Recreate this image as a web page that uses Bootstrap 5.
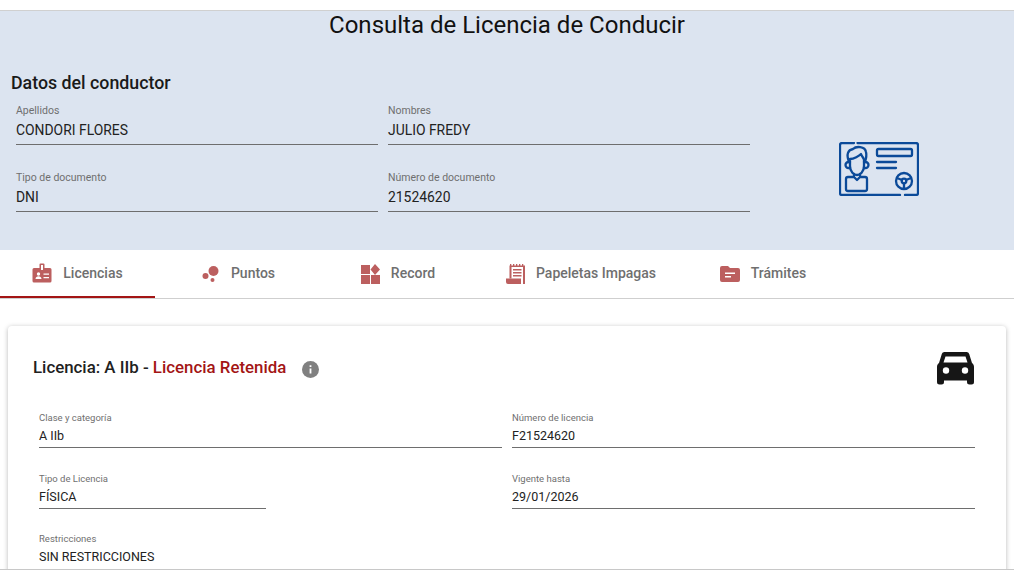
<!DOCTYPE html>
<html lang="es">

<head>
    <meta charset="UTF-8">
    <title>Consulta de Licencia de Conducir</title>
    <meta name="viewport" content="width=device-width, initial-scale=1">
    <link href="https://cdn.jsdelivr.net/npm/bootstrap@5.3.3/dist/css/bootstrap.min.css" rel="stylesheet">
    <style>
        html, body { height: 100%; overflow: hidden; }
        body { font-family: Roboto, "Liberation Sans", sans-serif; background: #fff; color: #212121; }

        .page-frame { margin-top: 10px; height: 560px; overflow: hidden; border-top: 1px solid #d0d0d0; border-bottom: 1px solid #c8c8c8; }

        /* cabecera */
        .head-panel { height: 239px; background: #dce4f0; }
        .head-title { font-size: 24px; font-weight: 400; line-height: 28px; margin: 0; text-align: center; color: #111; }
        .head-sub { font-size: 17.8px; font-weight: 500; line-height: 22px; margin: 33px 0 0 11px; color: #1a1a1a; }
        .driver-grid { width: 760px; padding: 0 0 0 16px; display: grid; grid-template-columns: 362px 362px; column-gap: 10px; row-gap: 26px; margin-top: 10px; }
        .icon-slot { width: 254px; padding-left: 79px; margin-top: 48px; }

        .data-field { border-bottom: 1px solid #6e6e6e; }
        .data-field label { display: block; font-size: 10.5px; line-height: 13px; color: #6f6f6f; margin: 0; }
        .data-field div { font-size: 13.9px; line-height: 18px; color: #222; margin-top: 4px; padding-bottom: 5px; }

        /* tabs */
        .tab-strip { height: 49px; border-bottom: 1px solid #cfcfcf; flex-wrap: nowrap; }
        .tab-strip .nav-link { height: 48px; padding: 0 0 1px; display: flex; align-items: center; justify-content: center; gap: 11px; font-size: 14px; font-weight: 500; color: #6f6f6f; }
        .tab-strip .nav-link.active { border-bottom: 2px solid #a31515; height: 48px; padding-bottom: 0; color: #6f6f6f; }
        .tab-w1 { width: 155px; }
        .tab-w2 { width: 167px; }
        .tab-w3 { width: 152px; }
        .tab-w4 { width: 214px; }
        .tab-w5 { width: 150px; }
        .tab-glyph { fill: #bc5f5f; display: block; }

        /* tarjeta */
        .lic-card { margin: 27px 8px 0; border: 0; border-radius: 4px; box-shadow: 0 1px 5px rgba(0, 0, 0, .28); padding: 26px 32px 40px 25px; }
        .lic-title { font-size: 16.85px; font-weight: 500; line-height: 20px; margin: 4px 0 0; color: #212121; }
        .lic-title span { color: #a31515; }
        .lic-head { height: 54px; }
        .info-dot { margin-left: 16px; margin-top: 9px; }
        .lic-grid { padding-left: 6px; display: grid; grid-template-columns: 463px 463px; column-gap: 10px; row-gap: 24.5px; margin-top: 6px; }
        .lic-grid .data-field label { font-size: 9.5px; line-height: 12px; }
        .lic-grid .data-field div { font-size: 12.5px; line-height: 16px; margin-top: 4px; padding-bottom: 3px; }
        .short-field { width: 227px; }
        .no-rule { border-bottom: 0 !important; }
    </style>
</head>

<body>
    <div class="page-frame">

        <!-- Datos del conductor -->
        <section class="head-panel">
            <h1 class="head-title">Consulta de Licencia de Conducir</h1>
            <h2 class="head-sub">Datos del conductor</h2>
            <div class="d-flex">
                <div class="driver-grid">
                    <div class="data-field"><label>Apellidos</label><div>CONDORI FLORES</div></div>
                    <div class="data-field"><label>Nombres</label><div>JULIO FREDY</div></div>
                    <div class="data-field"><label>Tipo de documento</label><div>DNI</div></div>
                    <div class="data-field"><label>Número de documento</label><div>21524620</div></div>
                </div>
                <div class="icon-slot">
                    <svg width="80" height="54" viewBox="0 0 80 54" fill="none" stroke="#0b4a99" stroke-width="2.3" stroke-linecap="round" stroke-linejoin="round">
                        <path d="M15 1H3a2 2 0 0 0-2 2v48a2 2 0 0 0 2 2h58"/>
                        <path d="M18.500 1H77a2 2 0 0 1 2 2v48a2 2 0 0 1-2 2H66"/>
                        <rect x="38" y="7" width="35" height="7" rx="1.500"/>
                        <path d="M38 20h19M38 26h19"/>
                        <path d="M10 20C7 12 9 8 14 7c3-3 12-3 13 3 1 4 0 7-1 10"/>
                        <path d="M11 17c4 0 9-3 11-5 1 3 3 4 3 6v6c0 6-4 9-7 9s-7-3-7-9z"/>
                        <path d="M11 20H9.500a3 3 0 0 0 0 6H11M25 20h1.500a3 3 0 0 1 0 6H25"/>
                        <path d="M15 32v3H9a2 2 0 0 0-2 2v10a2 2 0 0 0 2 2h17a2 2 0 0 0 2-2V37a2 2 0 0 0-2-2h-5v-3M15 35l3 3 3-3"/>
                        <circle cx="65" cy="39" r="8"/>
                        <circle cx="65" cy="39" r="2.300"/>
                        <path d="M58 36l5 2M72 36l-5 2M65 42v4"/>
                    </svg>
                </div>
            </div>
        </section>

        <!-- Tabs -->
        <ul class="nav tab-strip">
            <li class="nav-item tab-w1">
                <a class="nav-link active" href="#">
                    <svg class="tab-glyph" width="20" height="20" viewBox="0 0 20 20"><path d="M2 5h5.500V1.500a1 1 0 0 1 1-1h3a1 1 0 0 1 1 1V5H18a1.500 1.500 0 0 1 1.500 1.500V18a1.500 1.500 0 0 1-1.500 1.500H2A1.500 1.500 0 0 1 .5 18V6.500A1.500 1.500 0 0 1 2 5z"/><path fill="#fff" d="M9 2h2v5H9z"/><circle cx="6.500" cy="11" r="1.700" fill="#fff"/><path fill="#fff" d="M3.500 16c0-2 1.500-2.800 3-2.800s3 .8 3 2.800zM11.500 10.500H17v1.300h-5.500zM11.500 14H17v1.300h-5.500z"/></svg>
                    Licencias
                </a>
            </li>
            <li class="nav-item tab-w2">
                <a class="nav-link" href="#">
                    <svg class="tab-glyph" width="18" height="18" viewBox="0 0 18 18"><circle cx="11.500" cy="6" r="5"/><circle cx="3.500" cy="11" r="3"/><circle cx="10.500" cy="15" r="2"/></svg>
                    Puntos
                </a>
            </li>
            <li class="nav-item tab-w3">
                <a class="nav-link" href="#">
                    <svg class="tab-glyph" width="19" height="20" viewBox="0 0 19 20"><path d="M0 1h9v9H0zM0 11h9v9H0zM10 11h9v9h-9zM14 0l5 5.500-5 5.500-4.500-5.500z"/></svg>
                    Record
                </a>
            </li>
            <li class="nav-item tab-w4">
                <a class="nav-link" href="#">
                    <svg class="tab-glyph" width="19" height="20" viewBox="0 0 19 20"><path d="M4 0h1.300v1.500H7V0h1.300v1.500H10V0h1.300v1.500H13V0h1.300v1.500H16V0h1.300v1.500H19V19.500a.5.500 0 0 1-.5.500H17V3H5.500v11.500H3.500V1.500H4z"/><path d="M7 5h8.500v1.600H7zM7 8h8.500v1.600H7zM7 11h8.500v1.600H7zM0 14.500h15V20H2a2 2 0 0 1-2-2z"/></svg>
                    Papeletas Impagas
                </a>
            </li>
            <li class="nav-item tab-w5">
                <a class="nav-link" href="#">
                    <svg class="tab-glyph" width="20" height="16" viewBox="0 0 20 16"><path d="M2 0h6l2 2h8a2 2 0 0 1 2 2v10a2 2 0 0 1-2 2H2a2 2 0 0 1-2-2V2a2 2 0 0 1 2-2z"/><path fill="#fff" d="M5 6.500h10V8H5zM5 10h6v1.500H5z"/></svg>
                    Trámites
                </a>
            </li>
        </ul>

        <!-- Licencia -->
        <div class="card lic-card">
            <div class="lic-head d-flex justify-content-between align-items-start">
                <div class="d-flex align-items-center">
                    <h3 class="lic-title">Licencia: A IIb - <span>Licencia Retenida</span></h3>
                    <svg class="info-dot" width="17" height="17" viewBox="0 0 17 17"><circle cx="8.500" cy="8.500" r="8.500" fill="#808080"/><path fill="#fff" d="M7.600 7.500h1.800v5H7.600zM7.600 4.300h1.800V6H7.600z"/></svg>
                </div>
                <svg width="37" height="33" viewBox="0 0 37 33"><path fill="#161616" d="M7.500 0h22c1.300 0 2.300.8 2.700 2L35 11c1.300 1 2 2.300 2 4v15a2.500 2.500 0 0 1-2.500 2.500h-2A2.500 2.500 0 0 1 30 30v-1.500H7V30a2.500 2.500 0 0 1-2.500 2.500h-2A2.500 2.500 0 0 1 0 30V15c0-1.700.7-3 2-4L4.800 2c.4-1.200 1.400-2 2.700-2z"/><path fill="#fff" d="M8.500 4.500h20l2 6h-24z"/><circle cx="9" cy="18.500" r="3.200" fill="#fff"/><circle cx="28" cy="18.500" r="3.200" fill="#fff"/></svg>
            </div>
            <div class="lic-grid">
                <div class="data-field"><label>Clase y categoría</label><div>A IIb</div></div>
                <div class="data-field"><label>Número de licencia</label><div>F21524620</div></div>
                <div class="data-field short-field"><label>Tipo de Licencia</label><div>FÍSICA</div></div>
                <div class="data-field"><label>Vigente hasta</label><div>29/01/2026</div></div>
                <div class="data-field no-rule"><label>Restricciones</label><div>SIN RESTRICCIONES</div></div>
            </div>
        </div>
    </div>

    <script src="https://cdn.jsdelivr.net/npm/bootstrap@5.3.3/dist/js/bootstrap.bundle.min.js"></script>
</body>

</html>
